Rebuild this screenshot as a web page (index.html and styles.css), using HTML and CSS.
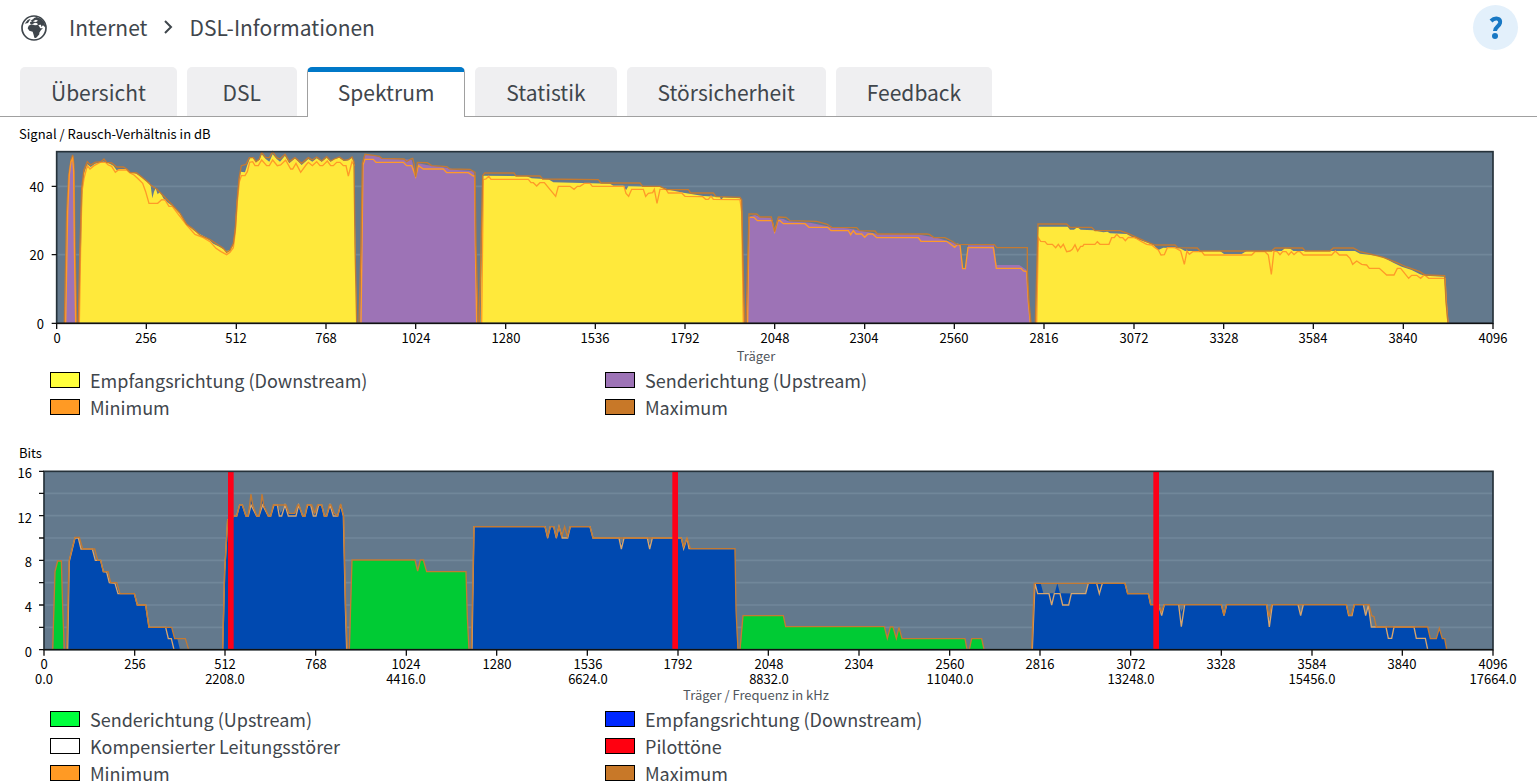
FILE: index.html
```html
<!DOCTYPE html>
<html lang="de">
<head>
<meta charset="utf-8">
<title>DSL-Informationen</title>
<link rel="stylesheet" href="styles.css">
</head>
<body>
<header class="topbar">
  <svg class="globe" viewBox="0 0 78 78" aria-hidden="true">
    <circle class="globe-ring" cx="39" cy="39" r="36"/>
    <path class="globe-land" d="M39 9 47 6 60 11 70 22 74 38 66 31 61 36 60 29 52 30 58 40 66 40 60 45 55 53 55 58 50 64 45 69 40 68 38 60 35 50 25 47 20 40 23 32 31 28 42 31 50 30 49 25 42 23 35 27 28 27 27 22 34 18 28 17 37 12ZM11 26 20 15 29 11 21 24Z"/>
    <path class="globe-sea" d="M36 19 45 14 51 17 45 21 39 20Z"/>
  </svg>
  <nav class="crumbs" aria-label="Pfad">
    <a href="#internet">Internet</a>
    <svg class="chevron" viewBox="0 0 10 14" aria-hidden="true"><path d="M2 1 8 7 2 13"/></svg>
    <span>DSL-Informationen</span>
  </nav>
  <button class="help" type="button" aria-label="Hilfe"><svg viewBox="0 0 12 22" aria-hidden="true"><path d="M1 4C5 0 11 1 10 6C9 10 5 10 5 14"/><circle cx="5" cy="19" r="3"/></svg></button>
</header>
<nav class="tabs">
  <a href="#uebersicht">Übersicht</a>
  <a href="#dsl">DSL</a>
  <a class="active" href="#spektrum" aria-current="page">Spektrum</a>
  <a href="#statistik">Statistik</a>
  <a href="#stoersicherheit">Störsicherheit</a>
  <a href="#feedback">Feedback</a>
</nav>
<main>
  <section class="block">
    <svg class="chart" viewBox="0 0 1537 250" role="img" aria-label="Signal / Rausch-Verhältnis">
      <text x="19" y="22">Signal / Rausch-Verhältnis in dB</text>
      <svg x="0" y="28" width="1537" height="215" viewBox="0 0 4611 645">
        <rect class="plot" x="170" y="20" width="4309" height="515"/>
        <path class="grid" d="M170 124H4479M170 329H4479"/>
        <g>
          <path class="up-snr" d="M195 535 203 200 208 80 213 50 218 40 222 60 226 300 230 535Z"/>
          <path class="max" d="M193 535 200 200 206 90 213 45 218 30 222 60 225 300 230 535"/>
          <path class="min" d="M197 535 203 200 208 90 213 50 218 40 221 80 223 300 227 535"/>
          <path class="down-snr" d="M237 535 242 350 247 150 252 85 262 58 272 66 285 56 310 50 325 54 340 62 350 76 360 72 380 72 390 82 405 84 425 96 437 108 447 112 452 122 457 160 462 140 467 130 473 148 480 140 490 160 500 170 520 185 540 205 560 237 580 255 600 268 620 278 640 296 660 306 680 318 690 316 700 300 706 260 711 180 716 120 722 80 735 82 742 60 750 40 758 38 768 50 778 45 785 28 797 42 808 50 818 28 830 42 840 50 855 32 868 55 885 40 905 60 925 42 937 50 950 40 965 50 980 38 992 50 1003 42 1018 38 1032 48 1045 46 1056 38 1062 50 1066 300 1070 535Z"/>
          <path class="min" d="M238 535 242 300 246 140 252 100 262 62 270 72 282 62 300 52 316 52 325 60 335 64 346 82 355 75 380 75 390 84 402 90 415 102 428 115 437 140 447 175 473 175 485 164 495 165 507 184 517 184 535 208 560 240 585 268 610 278 630 290 648 310 663 320 680 329 690 322 700 308 706 260 712 170 718 110 724 92 735 92 742 80 749 52 758 50 765 62 775 62 785 45 800 62 808 62 818 45 832 62 842 60 857 45 872 72 878 72 888 55 902 82 918 60 925 52 937 62 950 50 960 62 968 62 982 48 992 62 1000 62 1010 52 1020 52 1030 62 1038 62 1045 93 1056 50 1064 62"/>
          <path class="max" d="M235 535 240 300 245 130 252 75 262 50 272 60 285 52 303 50 312 42 320 52 335 54 350 66 370 66 380 72 390 82 410 84 440 108 452 120 470 132 490 152 515 178 540 205 560 238 580 252 600 270 630 284 655 300 670 310 680 322 690 316 700 295 706 250 711 170 717 100 724 62 738 58 748 38 760 38 768 50 778 42 785 22 797 38 808 38 818 20 830 38 840 42 855 28 868 50 885 38 905 55 925 38 937 45 950 36 965 48 980 35 992 48 1003 42 1018 36 1032 46 1045 44 1056 36 1062 50 1065 300 1070 535"/>
        </g>
        <g transform="translate(1020)">
          <path class="up-snr" d="M60 535 64 300 68 60 75 28 105 32 130 40 215 44 222 70 227 90 235 55 260 60 320 68 350 75 400 78 405 95 408 300 412 535Z"/>
          <path class="min" d="M63 535 66 300 69 60 75 43 100 43 108 52 190 52 200 62 215 62 227 95 235 62 250 72 310 72 320 83 385 83 400 93 404 93 406 300 410 535"/>
          <path class="max" d="M57 535 63 300 67 55 75 28 105 32 118 34 125 40 192 42 200 50 212 42 218 40 222 55 227 95 232 52 262 53 275 62 320 65 330 72 390 73 405 82 408 300 415 535"/>
          <path class="down-snr" d="M422 535 426 300 430 92 560 94 575 100 625 103 640 112 810 116 820 122 850 122 858 136 865 124 960 126 990 135 1030 143 1090 153 1140 156 1143 165 1150 157 1200 160 1205 170 1208 400 1212 535Z"/>
          <path class="min" d="M425 535 430 104 438 102 446 94 453 103 565 103 573 113 580 113 590 123 600 113 613 113 647 154 655 124 690 124 702 133 712 124 720 124 733 115 750 115 757 124 852 124 858 145 866 154 875 133 910 133 917 154 925 145 938 143 943 133 951 175 960 133 978 133 985 144 1025 144 1035 154 1088 155 1097 163 1105 163 1113 153 1120 163 1200 164 1205 200 1210 535"/>
          <path class="max" d="M418 535 428 92 434 84 522 84 528 93 600 93 608 102 775 104 783 114 900 114 908 124 960 124 980 134 1045 134 1052 144 1120 144 1128 155 1200 157 1205 165 1208 300 1214 535"/>
        </g>
        <g transform="translate(2190)">
          <path class="up-snr" d="M50 535 57 215 75 210 90 216 125 220 134 255 142 220 160 222 175 229 240 233 300 245 350 250 440 266 560 268 620 278 660 290 690 300 697 370 707 370 714 301 792 301 800 360 868 360 890 375 896 470 902 535Z"/>
          <path class="min" d="M53 535 57 217 72 217 82 227 126 227 134 260 144 227 150 227 160 236 225 236 237 247 293 247 303 257 355 257 362 269 370 257 378 267 395 267 404 277 414 267 428 267 440 278 565 278 573 289 650 289 662 298 674 307 683 298 690 300 698 371 706 371 714 308 790 308 799 370 873 370 880 378 890 380 895 470 901 535"/>
          <path class="max" d="M48 535 57 207 80 207 90 216 124 216 134 260 145 216 168 217 180 227 260 229 290 237 305 247 380 248 388 257 435 258 442 267 590 267 598 268 612 278 645 278 665 288 680 298 793 299 800 308 892 308 892 380 897 470 903 535"/>
        </g>
        <g transform="translate(3060)">
          <path class="down-snr" d="M48 535 51 400 55 245 143 245 150 254 162 254 172 247 182 254 220 256 250 262 262 260 270 265 320 267 340 278 375 290 400 300 415 315 430 308 480 310 495 318 600 318 612 327 665 327 680 318 785 318 795 310 812 312 820 318 1005 318 1020 326 1075 333 1095 340 1120 353 1145 365 1175 375 1200 388 1215 392 1273 395 1278 470 1284 535Z"/>
          <path class="min" d="M50 535 55 278 62 289 75 290 82 298 97 298 107 308 115 298 122 308 130 298 140 320 150 318 157 313 165 299 173 318 182 304 188 304 192 298 225 298 232 290 240 298 267 298 275 278 283 278 290 268 300 278 308 278 316 287 325 277 345 278 365 290 380 298 395 300 405 308 415 315 423 330 433 329 442 308 465 308 482 318 493 358 501 318 508 328 518 320 545 320 553 330 695 330 705 320 735 320 745 330 754 388 762 318 772 320 780 329 788 320 798 320 806 330 814 320 822 329 832 320 840 320 850 330 935 330 946 318 958 330 980 330 990 340 998 358 1010 348 1025 358 1040 360 1048 370 1078 370 1100 390 1122 390 1132 370 1142 370 1166 400 1175 391 1190 391 1202 400 1213 389 1226 400 1275 400 1279 470 1284 535"/>
          <path class="max" d="M46 535 54 237 140 237 150 247 215 247 225 257 300 257 325 266 350 277 375 288 405 300 465 300 473 308 532 309 540 318 755 318 765 309 848 309 855 318 930 318 940 309 1000 309 1020 320 1055 328 1090 337 1130 353 1160 366 1200 380 1215 390 1274 392 1278 470 1284 535"/>
        </g>
        <rect class="frame" x="170" y="20" width="4309" height="515"/>
        <path class="tick" d="M155 124H170M155 329H170M155 535H4479M170 535V552M439 535V552M709 535V552M978 535V552M1247 535V552M1517 535V552M1786 535V552M2055 535V552M2324 535V552M2594 535V552M2863 535V552M3132 535V552M3402 535V552M3671 535V552M3940 535V552M4210 535V552M4479 535V552"/>
      </svg>
      <g class="y-labels">
        <text x="44" y="75">40</text><text x="44" y="143">20</text><text x="44" y="212">0</text>
      </g>
      <g class="x-labels">
        <text x="57" y="226">0</text><text x="146" y="226">256</text><text x="236" y="226">512</text><text x="326" y="226">768</text><text x="416" y="226">1024</text><text x="506" y="226">1280</text><text x="595" y="226">1536</text><text x="685" y="226">1792</text><text x="775" y="226">2048</text><text x="864" y="226">2304</text><text x="954" y="226">2560</text><text x="1044" y="226">2816</text><text x="1134" y="226">3072</text><text x="1224" y="226">3328</text><text x="1313" y="226">3584</text><text x="1403" y="226">3840</text><text x="1493" y="226">4096</text>
        <text class="axis-name" x="756" y="244">Träger</text>
      </g>
    </svg>
    <ul class="legend">
      <li><i class="swatch yellow"></i>Empfangsrichtung (Downstream)</li>
      <li><i class="swatch purple"></i>Senderichtung (Upstream)</li>
      <li><i class="swatch orange"></i>Minimum</li>
      <li><i class="swatch brown"></i>Maximum</li>
    </ul>
  </section>
  <section class="block">
    <svg class="chart" viewBox="0 0 1537 266" role="img" aria-label="Bits pro Träger">
      <text x="19" y="18">Bits</text>
      <svg x="0" y="0" width="1537" height="260" viewBox="0 0 4611 780">
        <rect class="plot" x="132" y="94" width="4347" height="535"/>
        <path class="grid" d="M132 160H4479M132 227H4479M132 294H4479M132 361H4479M132 428H4479M132 495H4479M132 562H4479"/>
        <g>
          <path class="up-bit" d="M160 629 165 395 173 363 184 363 188 500 190 629Z"/>
          <path class="max" d="M158 629 165 395 173 363 184 363 188 500 193 629"/>
          <path class="down-bit" d="M203 629 208 363 225 294 235 294 245 327 278 327 288 361 302 361 310 395 322 395 330 428 348 428 357 461 403 461 412 495 437 495 447 562 515 562 523 596 532 596 540 629Z"/>
          <path class="min-bit" d="M203 629 208 363 225 294 235 294 243 327 277 327 286 361 302 361 310 395 320 396 328 428 345 430 354 461 403 461 412 495 437 495 447 562 497 562 505 596 514 596 522 629"/>
          <path class="max" d="M200 629 207 363 225 292 238 292 248 327 284 327 293 361 302 361 310 395 324 395 332 428 350 428 360 461 403 461 412 495 437 495 447 562 515 562 524 596 556 596 566 629"/>
          <path class="down-bit" d="M668 629 674 395 683 240 703 228 710 228 719 195 727 195 738 228 745 228 753 180 770 228 777 228 788 180 805 228 812 228 822 195 832 195 842 220 855 195 868 220 888 220 896 195 908 228 915 228 923 195 932 195 940 220 948 220 956 195 965 195 973 228 980 228 990 195 1002 220 1013 228 1022 195 1030 228 1036 500 1040 629Z"/>
          <path class="min-bit" d="M668 629 674 395 683 240 703 228 710 228 719 195 727 195 738 228 745 228 753 195 770 228 777 228 788 195 805 228 812 228 822 195 832 195 838 228 845 228 855 195 865 228 888 228 896 195 908 228 915 228 923 195 932 195 940 228 948 228 956 195 965 195 973 228 980 228 990 195 1000 228 1013 228 1022 195 1030 228 1036 500 1040 629"/>
          <path class="max" d="M668 629 674 395 683 240 703 228 710 228 719 195 727 195 738 228 744 228 749 195 753 162 758 195 770 228 777 228 783 195 786 162 791 195 805 228 812 228 820 195 858 195 867 220 884 220 893 195 897 195 908 228 915 228 921 195 935 195 944 220 953 195 965 195 973 228 980 228 988 195 993 195 1002 220 1013 228 1022 192 1031 228 1037 500 1042 629"/>
        </g>
        <g transform="translate(1020 60)">
          <path class="up-bit" d="M30 568 36 300 225 300 233 333 241 300 250 300 260 335 378 335 382 470 386 568Z"/>
          <path class="max" d="M28 568 36 300 225 300 233 333 241 300 250 300 260 335 378 335 382 470 387 568"/>
          <path class="down-bit" d="M396 568 402 200 615 200 623 234 631 200 641 200 649 234 657 200 667 234 683 234 691 200 750 200 759 234 837 234 844 250 852 234 922 234 929 250 937 234 1024 234 1031 266 1041 234 1049 266 1184 266 1188 450 1192 568Z"/>
          <path class="min-bit" d="M396 568 402 200 615 200 623 234 631 200 641 200 649 234 657 200 667 234 683 234 691 200 750 200 759 234 837 234 844 267 852 234 922 234 929 267 937 234 1024 234 1031 266 1041 234 1047 266 1184 266"/>
          <path class="max" d="M394 568 402 200 615 200 623 230 631 200 641 200 649 230 657 200 665 230 674 200 682 230 691 200 750 200 759 234 1024 234 1031 260 1041 234 1051 266 1185 266 1188 450 1194 568"/>
        </g>
        <g transform="translate(2160 60)">
          <path class="up-bit" d="M62 568 69 467 190 467 197 500 493 500 502 535 511 501 519 501 529 535 537 502 546 536 735 536 741 568 748 568 755 536 785 536 792 568Z"/>
          <path class="max" d="M60 568 69 467 190 467 197 500 493 500 502 535 511 501 519 501 529 535 537 502 546 536 735 536 741 568 748 568 755 536 785 536 792 568"/>
        </g>
        <g transform="translate(3060 60)">
          <path class="down-bit" d="M37 568 43 370 62 370 70 400 104 400 112 370 120 400 197 401 205 370 315 370 323 401 385 401 392 434 416 434 425 460 433 434 476 434 484 455 494 434 604 434 612 467 620 434 740 434 748 480 757 434 834 434 842 460 850 434 979 434 986 467 996 467 1003 434 1030 434 1037 467 1045 436 1054 501 1223 501 1231 536 1249 536 1258 505 1267 536 1274 536 1280 568Z"/>
          <path class="min-bit" d="M37 568 45 370 53 401 87 401 95 435 103 401 120 401 128 435 146 435 154 401 197 401 205 370 230 370 238 401 247 370 315 370 323 401 385 401 392 434 416 434 425 467 433 434 476 434 484 500 494 434 604 434 612 467 620 434 740 434 748 501 757 434 834 434 842 467 850 434 979 434 986 467 996 467 1003 434 1030 434 1037 467 1045 436 1054 501 1098 501 1105 535 1115 535 1122 501 1182 501 1189 535 1216 535 1223 568"/>
          <path class="max" d="M35 568 43 370 315 370 323 401 385 401 392 434 416 434 424 455 433 434 604 434 612 465 620 434 740 434 747 470 755 434 979 434 987 465 994 465 1003 434 1047 434 1055 467 1062 470 1069 501 1223 501 1231 536 1249 536 1258 505 1267 536 1274 536 1280 568"/>
        </g>
        <path class="pilot" d="M684 94H701V629H684ZM2017 94H2034V629H2017ZM3460 94H3477V629H3460Z"/>
        <rect class="frame" x="132" y="94" width="4347" height="535"/>
        <path class="tick" d="M117 94H132M117 160H132M117 227H132M117 294H132M117 361H132M117 428H132M117 495H132M117 562H132M117 629H4479M132 629V647M404 629V647M675 629V647M947 629V647M1219 629V647M1490 629V647M1762 629V647M2034 629V647M2305 629V647M2577 629V647M2849 629V647M3120 629V647M3392 629V647M3664 629V647M3936 629V647M4207 629V647M4479 629V647"/>
      </svg>
      <g class="y-labels">
        <text x="32" y="38">16</text><text x="32" y="83">12</text><text x="32" y="127">8</text><text x="32" y="172">4</text><text x="32" y="217">0</text>
      </g>
      <g class="x-labels">
        <text x="44" y="229">0</text><text x="135" y="229">256</text><text x="225" y="229">512</text><text x="316" y="229">768</text><text x="406" y="229">1024</text><text x="497" y="229">1280</text><text x="588" y="229">1536</text><text x="678" y="229">1792</text><text x="769" y="229">2048</text><text x="859" y="229">2304</text><text x="950" y="229">2560</text><text x="1040" y="229">2816</text><text x="1131" y="229">3072</text><text x="1221" y="229">3328</text><text x="1312" y="229">3584</text><text x="1402" y="229">3840</text><text x="1493" y="229">4096</text>
        <text x="44" y="244">0.0</text><text x="225" y="244">2208.0</text><text x="406" y="244">4416.0</text><text x="588" y="244">6624.0</text><text x="769" y="244">8832.0</text><text x="950" y="244">11040.0</text><text x="1131" y="244">13248.0</text><text x="1312" y="244">15456.0</text><text x="1493" y="244">17664.0</text>
        <text class="axis-name" x="756" y="260">Träger / Frequenz in kHz</text>
      </g>
    </svg>
    <ul class="legend">
      <li><i class="swatch green"></i>Senderichtung (Upstream)</li>
      <li><i class="swatch blue"></i>Empfangsrichtung (Downstream)</li>
      <li><i class="swatch white"></i>Kompensierter Leitungsstörer</li>
      <li><i class="swatch red"></i>Pilottöne</li>
      <li><i class="swatch orange"></i>Minimum</li>
      <li><i class="swatch brown"></i>Maximum</li>
    </ul>
  </section>
</main>
</body>
</html>
```
FILE: styles.css
```css
* { box-sizing: border-box; }
body {
  margin: 0;
  background: #fff;
  color: #3f464c;
  font-family: "Noto Sans CJK SC", "Noto Sans", sans-serif;
  font-size: 18px;
}
a { color: inherit; text-decoration: none; }

.topbar {
  display: flex;
  align-items: center;
  height: 55px;
  padding: 0 19px 0 21px;
}
.globe { width: 26px; height: 26px; margin-right: 22px; }
.globe-ring { fill: none; stroke: #3f464c; stroke-width: 5; }
.globe-land { fill: #3f464c; }
.globe-sea { fill: #fff; }
.crumbs {
  display: flex;
  align-items: center;
  flex: 1;
  gap: 16px;
  padding-bottom: 2px;
  font-size: 21px;
  line-height: 28px;
}
.chevron { width: 10px; height: 14px; fill: none; stroke: #3f464c; stroke-width: 2; }
.help {
  display: grid;
  place-items: center;
  width: 45px;
  height: 45px;
  padding: 0;
  border: 0;
  border-radius: 50%;
  background: #e3f0fb;
}
.help svg { width: 12px; height: 22px; overflow: visible; fill: #1878c4; }
.help path { fill: none; stroke: #1878c4; stroke-width: 4; }

.tabs {
  display: flex;
  gap: 10px;
  margin-top: 12px;
  padding: 0 20px;
  border-bottom: 1px solid #a0a0a0;
  font-size: 21px;
}
.tabs a {
  min-width: 110px;
  height: 49px;
  padding: 0 31px;
  border-radius: 5px 5px 0 0;
  background: #efeff1;
  line-height: 50px;
  text-align: center;
}
.tabs .active {
  height: 50px;
  margin-bottom: -1px;
  padding: 0 30px;
  border: 1px solid #a0a0a0;
  border-top: 5px solid #0078c8;
  border-bottom: 0;
  background: #fff;
  line-height: 40px;
}

.block { margin-bottom: 19px; }
.chart { display: block; width: 100%; height: auto; font-size: 13px; fill: #000; }
.plot { fill: #63798d; }
.grid { stroke: #71879a; stroke-width: 5; }
.frame { fill: none; stroke: #26323a; stroke-width: 5; }
.tick { fill: none; stroke: #111; stroke-width: 4; }
.down-snr { fill: #ffe93b; }
.up-snr { fill: #9d73b6; }
.down-bit { fill: #0049b0; }
.up-bit { fill: #00cb34; }
.min, .min-bit, .max { fill: none; stroke-width: 4; }
.min { stroke: #ff9a28; }
.min-bit { stroke: #d9a66c; }
.max { stroke: #c47a32; }
.pilot { fill: #ff0018; }
.y-labels { text-anchor: end; }
.x-labels { text-anchor: middle; }
.axis-name { fill: #50565c; }

.legend {
  display: grid;
  grid-template-columns: 555px 1fr;
  margin: 0;
  padding: 0 0 0 50px;
  list-style: none;
}
.legend li { display: flex; align-items: center; gap: 10px; height: 27px; line-height: 27px; }
.swatch { width: 30px; height: 16px; margin-bottom: 2px; border: 1px solid #000; }
.yellow { background: #ffff3c; }
.purple { background: #9d73b6; }
.orange { background: #ff9a24; }
.brown { background: #c87828; }
.green { background: #00ff3c; }
.blue { background: #0028ff; }
.white { background: #fff; }
.red { background: #ff0010; }
```
